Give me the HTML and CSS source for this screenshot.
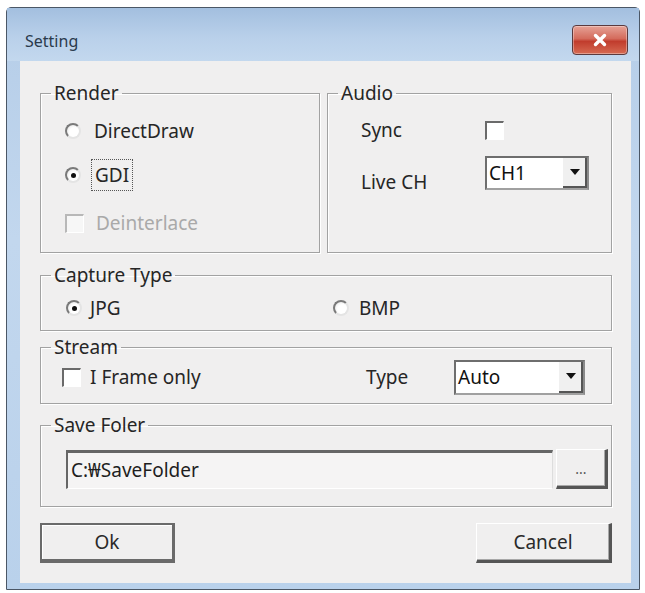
FILE: index.html
```html
<!DOCTYPE html>
<html lang="en">
<head>
    <meta charset="UTF-8">
    <title>Setting</title>
    <link rel="stylesheet" href="styles.css">
</head>
<body>

<div class="window">
    <div class="titlebar">
        <span class="title">Setting</span>
        <span class="close">
            <svg width="18" height="14" viewBox="0 0 18 14">
                <path d="M4.5 2.5 L13.5 11.5 M13.5 2.5 L4.5 11.5" stroke="#fff" stroke-width="3.4" stroke-linecap="round"/>
            </svg>
        </span>
    </div>

    <div class="client">
        <div class="row-top">
            <fieldset class="group render">
                <legend>Render</legend>
                <div class="body">
                    <div class="opt"><span class="radio"></span>DirectDraw</div>
                    <div class="opt"><span class="radio checked"></span><span class="focus">GDI</span></div>
                    <div class="opt disabled"><span class="check"></span>Deinterlace</div>
                </div>
            </fieldset>

            <fieldset class="group audio">
                <legend>Audio</legend>
                <div class="body">
                    <div class="field sync">
                        <span class="lbl">Sync</span>
                        <span class="check"></span>
                    </div>
                    <div class="field live">
                        <span class="lbl">Live CH</span>
                        <span class="select ch"><span class="val">CH1</span><span class="drop"></span></span>
                    </div>
                </div>
            </fieldset>
        </div>

        <fieldset class="group capture">
            <legend>Capture Type</legend>
            <div class="body line">
                <div class="opt jpg"><span class="radio checked"></span>JPG</div>
                <div class="opt bmp"><span class="radio"></span>BMP</div>
            </div>
        </fieldset>

        <fieldset class="group stream">
            <legend>Stream</legend>
            <div class="body line">
                <div class="opt iframe"><span class="check"></span>I Frame only</div>
                <span class="lbl type">Type</span>
                <span class="select auto"><span class="val">Auto</span><span class="drop"></span></span>
            </div>
        </fieldset>

        <fieldset class="group folder">
            <legend>Save Foler</legend>
            <div class="body line">
                <div class="path">C:₩SaveFolder</div>
                <div class="btn browse">...</div>
            </div>
        </fieldset>

        <div class="actions">
            <div class="btn default">Ok</div>
            <div class="btn">Cancel</div>
        </div>
    </div>
</div>

</body>
</html>
```

FILE: styles.css
```css
body {
    margin: 0;
    background: #fff;
    font-family: 'Noto Sans', 'DejaVu Sans', sans-serif;
    color: #262626;
}

.window {
    margin: 7px 0 0 6px;
    width: 634px;
    height: 583px;
    box-sizing: border-box;
    border: 1px solid #4b5766;
    border-radius: 5px 5px 0 0;
    background: linear-gradient(#b5cde8, #c2d7ee 40%, #b9d1eb);
    display: flex;
    flex-direction: column;
}

/* title bar */
.titlebar {
    height: 53px;
    flex: none;
    display: flex;
    align-items: flex-start;
    justify-content: space-between;
    padding: 0 11px 0 18px;
    background: linear-gradient(#a3bfdf, #b9d0ea 55%, #c3d8ee);
}

.titlebar .title {
    font-size: 16px;
    line-height: 20px;
    color: #2a3a4c;
    margin-top: 23px;
}

.titlebar .close {
    width: 56px;
    height: 30px;
    box-sizing: border-box;
    border: 1px solid #5b3a3e;
    border-radius: 4px;
    background: linear-gradient(#e6a296, #d46b5c 45%, #c13c2d 55%, #d66a52);
    box-shadow: inset 0 0 0 1px rgba(255,255,255,0.35);
    display: flex;
    align-items: center;
    justify-content: center;
    margin-top: 17px;
}

/* client area */
.client {
    flex: 1;
    margin: 0 8px 6px 13px;
    background: #f0efef;
    padding: 22px 19px 0 20px;
    box-sizing: border-box;
    font-size: 19px;
}

.group {
    margin: 0;
    padding: 0;
    border: 1px solid #a2a2a2;
    box-shadow: inset 1px 1px 0 #fff, 1px 1px 0 #fff;
    box-sizing: border-box;
    min-width: 0;
}

.group legend {
    margin-left: 10px;
    padding: 0 3px;
    line-height: 20px;
    font-size: 19px;
    color: #262626;
}

.row-top {
    display: flex;
    gap: 7px;
}

.render {
    width: 280px;
    height: 170px;
}

.render .body {
    padding: 6px 0 0 24px;
}

.audio {
    width: 285px;
    height: 170px;
}

.audio .body {
    padding: 7px 0 0 33px;
}

/* radios and checks */
.opt {
    display: flex;
    align-items: center;
    height: 44px;
}

.radio {
    width: 16px;
    height: 16px;
    box-sizing: border-box;
    border-radius: 50%;
    border: 2px solid #7a7a7a;
    border-right-color: #e4e4e4;
    border-bottom-color: #e4e4e4;
    background: radial-gradient(circle at 60% 60%, #fff 45%, #dedede);
    margin-right: 13px;
    display: flex;
    align-items: center;
    justify-content: center;
    flex: none;
}

.radio.checked::after {
    content: "";
    width: 5px;
    height: 5px;
    border-radius: 50%;
    background: #111;
}

.check {
    width: 19px;
    height: 19px;
    box-sizing: border-box;
    border-top: 2px solid #6a6a6a;
    border-left: 2px solid #6a6a6a;
    border-right: 1px solid #fff;
    border-bottom: 1px solid #fff;
    background: #fff;
    flex: none;
}

.render .opt .check {
    margin-right: 12px;
}

.opt.disabled {
    color: #a9a9a9;
    margin-top: 4px;
}

.opt.disabled .check {
    border-top-color: #b8b8b8;
    border-left-color: #b8b8b8;
    background: #f7f7f7;
}

.focus {
    outline: 1px dotted #555;
    outline-offset: 2px;
    padding: 0 1px;
}

/* audio fields */
.field {
    display: flex;
}

.field .lbl {
    width: 124px;
    flex: none;
}

.field.sync {
    height: 40px;
    align-items: center;
}

.field.live {
    margin-top: 6px;
}

.field.live .lbl {
    margin-top: 16px;
    line-height: 20px;
}

.select {
    display: flex;
    align-items: stretch;
    box-sizing: border-box;
    border: 2px solid #6e6e6e;
    border-right-color: #8a8a8a;
    border-bottom-color: #a0a0a0;
    background: #fff;
}

.select .val {
    flex: 1;
    display: flex;
    align-items: center;
    padding-left: 2px;
    color: #111;
}

.select .drop {
    width: 24px;
    box-sizing: border-box;
    background: #f0f0f0;
    border-right: 2px solid #555;
    border-bottom: 2px solid #555;
    position: relative;
}

.select .drop::after {
    content: "";
    position: absolute;
    left: 7px;
    top: 50%;
    margin-top: -3px;
    border-left: 5px solid transparent;
    border-right: 5px solid transparent;
    border-top: 6px solid #111;
}

.select.ch {
    width: 104px;
    height: 34px;
}

/* capture type */
.capture {
    margin-top: 12px;
    height: 66px;
}

.capture .body {
    padding: 5px 0 0 25px;
}

.line {
    display: flex;
    align-items: center;
}

.capture .opt {
    height: 36px;
}

.capture .radio {
    margin-right: 8px;
}

.capture .jpg {
    width: 267px;
}

.capture .bmp .radio {
    margin-right: 10px;
}

/* stream */
.stream {
    margin-top: 6px;
    height: 67px;
}

.stream .body {
    height: 40px;
    padding-left: 21px;
}

.stream .iframe {
    width: 304px;
}

.stream .iframe .check {
    margin-right: 9px;
}

.stream .type {
    width: 88px;
}

.select.auto {
    width: 131px;
    height: 35px;
}

/* save folder */
.folder {
    margin-top: 11px;
    height: 92px;
}

.folder .body {
    padding: 14px 3px 0 25px;
}

.path {
    width: 487px;
    height: 39px;
    box-sizing: border-box;
    border-top: 3px solid #666;
    border-left: 2px solid #666;
    border-right: 1px solid #ddd;
    border-bottom: 1px solid #fff;
    background: #f5f4f4;
    display: flex;
    align-items: center;
    padding-left: 3px;
    color: #1e1e1e;
}

.btn {
    box-sizing: border-box;
    background: #f0efef;
    border-top: 1px solid #fff;
    border-left: 1px solid #fff;
    border-right: 3px solid #555;
    border-bottom: 3px solid #555;
    box-shadow: inset -1px -1px 0 #a8a8a8;
    display: flex;
    align-items: center;
    justify-content: center;
    color: #2a2a2a;
}

.browse {
    margin-left: 3px;
    width: 52px;
    height: 40px;
    font-size: 14px;
    color: #555;
}

/* buttons */
.actions {
    margin-top: 16px;
    display: flex;
    justify-content: space-between;
}

.actions .btn {
    width: 136px;
    height: 40px;
    font-size: 19px;
}

.actions .btn.default {
    width: 135px;
    border: 2px solid #6a6a6a;
    border-right-width: 3px;
    border-bottom-width: 4px;
    box-shadow: inset 1px 1px 0 #fff;
}
```
